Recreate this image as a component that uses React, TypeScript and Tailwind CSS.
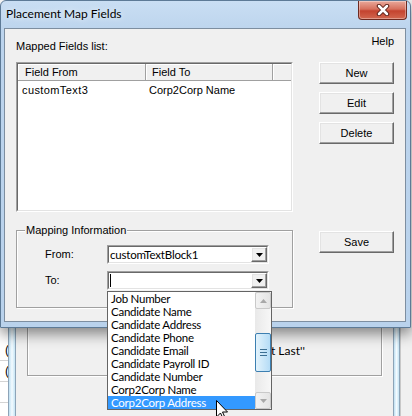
import React from 'react';

const sans = "font-['Liberation_Sans',Arial,sans-serif]";
const ui = "font-['Lato','Liberation_Sans',sans-serif]";

const raised =
  'border border-t-white border-l-white border-r-[#696969] border-b-[#696969] bg-[#f0f0f0] shadow-[inset_-1px_-1px_0_#a0a0a0,inset_1px_1px_0_#e3e3e3]';
const sunken = 'border border-t-[#a0a0a0] border-l-[#a0a0a0] border-r-white border-b-white';
const sunkenInner = 'border border-t-[#696969] border-l-[#696969] border-r-[#e3e3e3] border-b-[#e3e3e3]';

const choices = [
  'Job Number',
  'Candidate Name',
  'Candidate Address',
  'Candidate Phone',
  'Candidate Email',
  'Candidate Payroll ID',
  'Candidate Number',
  'Corp2Corp Name',
  'Corp2Corp Address',
];

function WinButton({ label }: { label: string }) {
  return (
    <div className={`flex h-[22px] w-[75px] items-center justify-center text-[11px] leading-[13px] text-black ${raised}`}>
      {label}
    </div>
  );
}

function DownTri() {
  return (
    <svg width="7" height="4" viewBox="0 0 7 4">
      <polygon points="0,0 7,0 3.5,4" fill="#000" />
    </svg>
  );
}

function Combo({ text, caret }: { text?: string; caret?: boolean }) {
  return (
    <div className={`h-[19px] w-[162px] ${sunken}`}>
      <div className={`flex h-full bg-white ${sunkenInner}`}>
        <div className={`flex flex-1 items-center pl-[1px] text-[11.5px] leading-[14px] tracking-[-0.2px] text-black ${ui}`}>
          {caret && <div className="h-[13px] w-[1px] bg-black" />}
          {text}
        </div>
        <div className={`flex h-full w-[16px] items-center justify-center ${raised}`}>
          <DownTri />
        </div>
      </div>
    </div>
  );
}

function ScrollArrow({ up }: { up?: boolean }) {
  return (
    <div className="flex h-[17px] items-center justify-center rounded-[2px] border border-[#c9c9c9] bg-[linear-gradient(to_right,#f2f2f2,#e4e4e4)]">
      <svg width="7" height="4" viewBox="0 0 7 4">
        <polygon points={up ? '0,4 7,4 3.5,0' : '0,0 7,0 3.5,4'} fill="#a8a8a8" />
      </svg>
    </div>
  );
}

function DropList() {
  return (
    <div className={`absolute left-[107px] top-[291px] flex h-[119px] w-[165px] border border-[#646464] bg-white ${ui}`}>
      <div className="flex flex-1 flex-col">
        {choices.map((c, i) => (
          <div
            key={c}
            className={`h-[13px] pl-[3px] text-[11.5px] leading-[13px] tracking-[-0.25px] ${
              i === choices.length - 1 ? 'bg-[#3399ff] text-white' : 'text-black'
            }`}
          >
            {c}
          </div>
        ))}
      </div>
      <div className="flex w-[16px] flex-col bg-[linear-gradient(to_right,#e9e9e9,#f7f7f7)]">
        <ScrollArrow up />
        <div className="h-[24px]" />
        <div className="flex h-[39px] flex-col items-center justify-center gap-[2px] rounded-[2px] border border-[#3c7fb1] bg-[linear-gradient(to_right,#e3f3fc,#b5dcf6)]">
          <div className="h-[1px] w-[7px] bg-[#3c6f93]" />
          <div className="h-[1px] w-[7px] bg-[#3c6f93]" />
          <div className="h-[1px] w-[7px] bg-[#3c6f93]" />
        </div>
        <div className="flex-1" />
        <ScrollArrow />
      </div>
    </div>
  );
}

function Cursor() {
  return (
    <svg className="absolute left-[216px] top-[400px]" width="13" height="21" viewBox="0 0 13 21">
      <path d="M0.5,0.5 L0.5,17 L4.5,13 L7.5,19.5 L9.5,18.5 L6.5,12 L11.5,12 Z" fill="#fff" stroke="#000" strokeWidth="1" />
    </svg>
  );
}

function BackWindow() {
  return (
    <div className="flex h-full w-full">
      <div className={`flex w-[8px] shrink-0 flex-col overflow-hidden bg-white pt-[340px] ${sans}`}>
        {['(', '(', '', ''].map((t, i) => (
          <div key={i} className="flex h-[21px] shrink-0 items-center border-b border-[#d4d4d4] pl-[5px] text-[12px]">
            {t}
          </div>
        ))}
      </div>
      <div className="w-[8px] shrink-0 border-x border-[#8da4b8] bg-[linear-gradient(to_right,#bfe0f2,#f4fbff,#c6e5f5)]" />
      <div className="flex min-w-0 flex-1 flex-col bg-[#f0f0f0] pt-[300px]">
        <div className="mx-[11px] h-[76px] border border-[#a0a0a0] shadow-[inset_1px_1px_0_#fff,1px_1px_0_#fff]">
          <div className={`ml-[243px] mt-[43px] text-[12px] leading-[14px] text-black ${ui}`}>t Last''</div>
        </div>
      </div>
      <div className="w-[7px] shrink-0 border-x border-[#8da4b8] bg-[linear-gradient(to_right,#bfe0f2,#f4fbff,#c6e5f5)]" />
      <div className="w-[12px] shrink-0 border-l border-[#c8c8c8] bg-[#f0f0f0]" />
    </div>
  );
}

function CloseButton() {
  return (
    <div className="absolute left-[357px] top-0 flex h-[19px] w-[49px] items-center justify-center rounded-b-[4px] border border-t-0 border-[#6e2a20] bg-[linear-gradient(to_bottom,#e9a99b,#d6705d_45%,#c4432f_55%,#d2674f)] shadow-[inset_0_0_0_1px_rgba(255,255,255,0.35)]">
      <svg width="14" height="12" viewBox="0 0 14 12">
        <path d="M3,2 L11,10 M11,2 L3,10" stroke="#5a2018" strokeWidth="4.5" strokeLinecap="round" />
        <path d="M3,2 L11,10 M11,2 L3,10" stroke="#fff" strokeWidth="2.5" strokeLinecap="round" />
      </svg>
    </div>
  );
}

function Dialog() {
  return (
    <div className="absolute left-0 top-0 flex h-[328px] w-[411px] flex-col rounded-t-[6px] border border-[#5d7a96] bg-[linear-gradient(to_bottom,#c9def3,#bcd4ed_30px,#b9d2ec)] shadow-[0_6px_14px_rgba(0,0,0,0.45)]">
      <div className="relative h-[27px] shrink-0">
        <div className={`pl-[5px] pt-[5px] text-[12px] leading-[16px] text-black [text-shadow:0_0_6px_#fff] ${ui}`}>
          Placement Map Fields
        </div>
        <CloseButton />
      </div>
      <div className={`ml-[3px] mr-[4px] flex h-[294px] border border-[#7d8ea0] bg-[#f0f0f0] text-[11px] leading-[13px] text-black ${sans}`}>
        <div className="ml-[11px] flex w-[277px] flex-col">
          <div className="mt-[11px]">Mapped Fields list:</div>
          <div className={`mt-[9px] h-[150px] ${sunken}`}>
            <div className={`flex h-full flex-col bg-white ${sunkenInner}`}>
              <div className="flex h-[17px] shrink-0">
                <div className="flex w-[128px] items-center border-b border-r border-[#a0a0a0] bg-[#f0f0f0] pl-[7px] shadow-[inset_1px_1px_0_#fff]">
                  Field From
                </div>
                <div className="flex w-[127px] items-center border-b border-r border-[#a0a0a0] bg-[#f0f0f0] pl-[6px] shadow-[inset_1px_1px_0_#fff]">
                  Field To
                </div>
                <div className="flex-1 border-b border-[#a0a0a0] bg-[#f0f0f0] shadow-[inset_1px_1px_0_#fff]" />
              </div>
              <div className="mt-[3px] flex h-[13px]">
                <div className="w-[128px] pl-[4px] tracking-[0.4px]">customText3</div>
                <div className="pl-[3px]">Corp2Corp Name</div>
              </div>
            </div>
          </div>
          <div className="mt-[18px] h-[78px] border border-[#a0a0a0] shadow-[inset_1px_1px_0_#fff,1px_1px_0_#fff]">
            <div className="-mt-[7px] ml-[8px] w-fit bg-[#f0f0f0] px-[1px] leading-[13px]">Mapping Information</div>
            <div className="mt-[8px] flex flex-col gap-[7px] pl-[28px]">
              <div className="flex h-[19px] items-center">
                <div className="w-[62px]">From:</div>
                <Combo text="customTextBlock1" />
              </div>
              <div className="flex h-[19px] items-center">
                <div className="w-[62px]">To:</div>
                <Combo caret />
              </div>
            </div>
          </div>
        </div>
        <div className="ml-[26px] flex w-[75px] flex-col">
          <div className="mt-[6px] self-end">Help</div>
          <div className="mt-[14px] flex flex-col gap-[8px]">
            <WinButton label="New" />
            <WinButton label="Edit" />
            <WinButton label="Delete" />
          </div>
          <div className="mt-[87px]">
            <WinButton label="Save" />
          </div>
        </div>
      </div>
    </div>
  );
}

export default function App() {
  return (
    <div className="relative h-[416px] w-[412px] overflow-hidden bg-[#f0f0f0]">
      <BackWindow />
      <Dialog />
      <DropList />
      <Cursor />
    </div>
  );
}
